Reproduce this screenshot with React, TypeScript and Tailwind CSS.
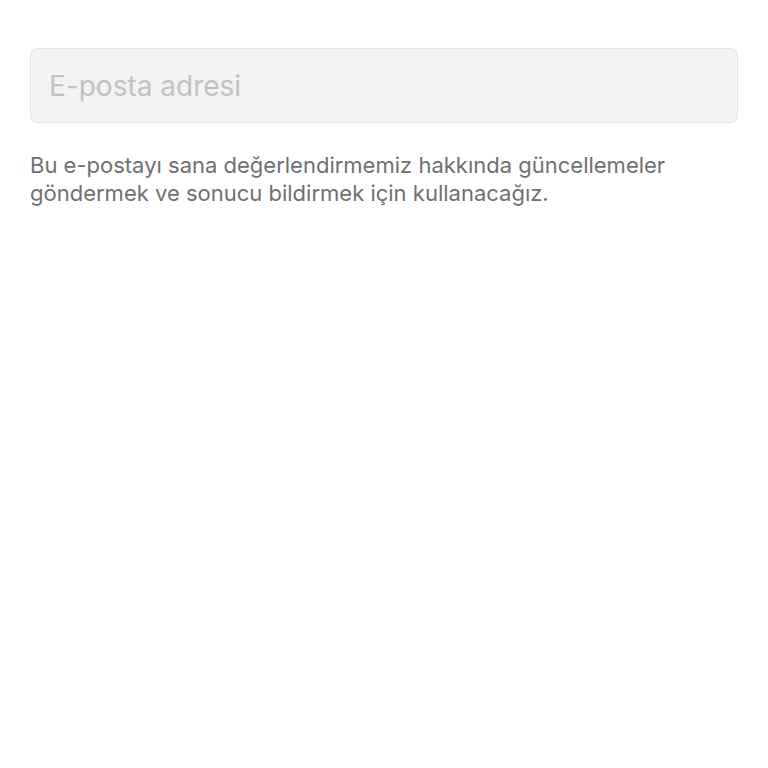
export default function App() {
  return (
    <div className="min-h-[768px] bg-white px-[30px] pt-[48px] font-['Inter',sans-serif]">
      <input
        type="email"
        placeholder="E-posta adresi"
        className="h-[75px] w-full rounded-[7px] border border-[#e4e4e4] bg-[#f3f3f3] px-[18px] text-[28px] text-[#333] outline-none placeholder:text-[#c2c2c2]"
      />
      <p className="mt-[28px] text-[22px] leading-[28px] text-[#707070]">
        Bu e-postayı sana değerlendirmemiz hakkında güncellemeler
        <br />
        göndermek ve sonucu bildirmek için kullanacağız.
      </p>
    </div>
  )
}
